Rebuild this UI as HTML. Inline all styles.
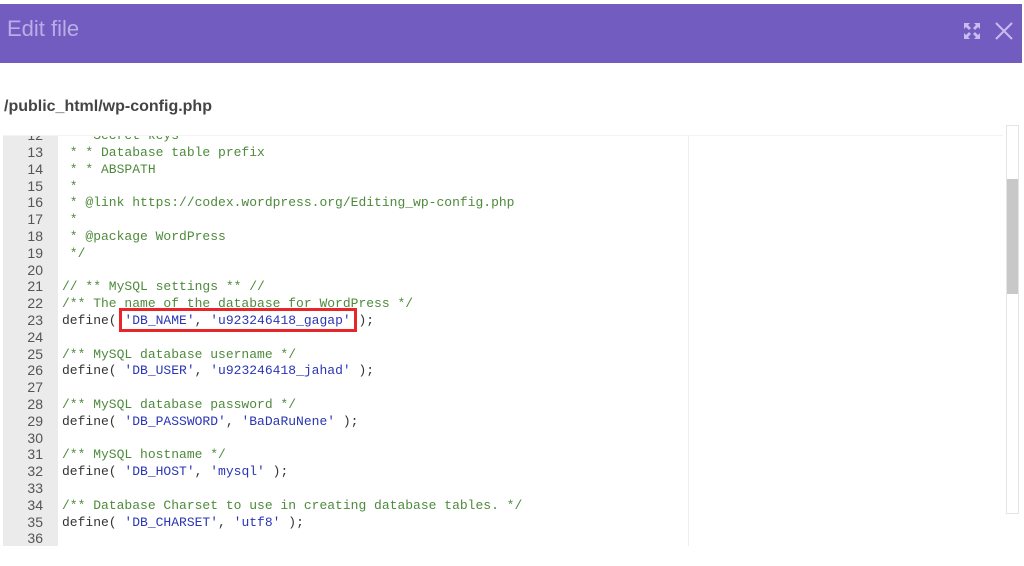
<!DOCTYPE html>
<html><head><meta charset="utf-8"><style>
body{margin:0;width:1024px;height:566px;background:#fff;position:relative;overflow:hidden;font-family:"Liberation Sans",sans-serif}
.hdr{position:absolute;left:0;top:4px;width:1022px;height:59px;background:#725cc0}
.hdr .t{position:absolute;left:7px;top:12px;font-size:22px;color:#b9aee6}
.path{position:absolute;left:4px;top:98px;font-size:16px;font-weight:bold;color:#444}
.ed{position:absolute;left:3px;top:135px;width:1000px;height:410px;overflow:hidden;border-top:1px solid #f3f3f3}
.gut{position:absolute;left:0;top:0;width:55px;height:410px;background:#ebebeb}
.margin{position:absolute;left:685px;top:0;width:1px;height:410px;background:#eee}
.ln{position:absolute;left:0;width:40px;text-align:right;font:14px/17px "Liberation Sans",sans-serif;color:#555}
.cd{position:absolute;left:59px;font:13px/17px "Liberation Mono",monospace;color:#333;white-space:pre}
.c{color:#4e8a3c}.s{color:#2a35b5}
.sb{position:absolute;left:1006px;top:125px;width:11px;height:387px;border:1px solid #e4e4e4;background:#fff}
.th{position:absolute;left:0;top:53px;width:11px;height:115px;background:#c8c8c8}
.box{position:absolute;left:119px;top:308px;width:238px;height:24px;border:3px solid #e8262a;box-sizing:border-box}
</style></head><body>
<div class="hdr"><div class="t">Edit file</div>
<svg style="position:absolute;left:963px;top:18px" width="18" height="18" viewBox="0 0 18 18" fill="#c6bdf0"><path d="M1 1h6l-2 2 3 3-2 2-3-3-2 2zM17 1v6l-2-2-3 3-2-2 3-3-2-2zM1 17v-6l2 2 3-3 2 2-3 3 2 2zM17 17h-6l2-2-3-3 2-2 3 3 2-2z"/></svg>
<svg style="position:absolute;left:995px;top:18px" width="18" height="18" viewBox="0 0 18 18" stroke="#c6bdf0" stroke-width="2"><path d="M1 1L17 17M17 1L1 17"/></svg>
</div>
<div class="path">/public_html/wp-config.php</div>
<div class="ed">
<div class="gut"></div><div class="margin"></div>
<div class="ln" style="top:-9px">12</div><div class="cd c" style="top:-9px">    Secret keys</div>
<div class="ln" style="top:8px">13</div><div class="cd c" style="top:8px"> * * Database table prefix</div>
<div class="ln" style="top:25px">14</div><div class="cd c" style="top:25px"> * * ABSPATH</div>
<div class="ln" style="top:42px">15</div><div class="cd c" style="top:42px"> *</div>
<div class="ln" style="top:58px">16</div><div class="cd c" style="top:58px"> * @link https://codex.wordpress.org/Editing_wp-config.php</div>
<div class="ln" style="top:75px">17</div><div class="cd c" style="top:75px"> *</div>
<div class="ln" style="top:92px">18</div><div class="cd c" style="top:92px"> * @package WordPress</div>
<div class="ln" style="top:109px">19</div><div class="cd c" style="top:109px"> */</div>
<div class="ln" style="top:126px">20</div>
<div class="ln" style="top:142px">21</div><div class="cd c" style="top:142px">// ** MySQL settings ** //</div>
<div class="ln" style="top:159px">22</div><div class="cd c" style="top:159px">/** The name of the database for WordPress */</div>
<div class="ln" style="top:176px">23</div><div class="cd" style="top:176px">define( <span class="s">'DB_NAME'</span>, <span class="s">'u923246418_gagap'</span> );</div>
<div class="ln" style="top:193px">24</div>
<div class="ln" style="top:210px">25</div><div class="cd c" style="top:210px">/** MySQL database username */</div>
<div class="ln" style="top:226px">26</div><div class="cd" style="top:226px">define( <span class="s">'DB_USER'</span>, <span class="s">'u923246418_jahad'</span> );</div>
<div class="ln" style="top:243px">27</div>
<div class="ln" style="top:260px">28</div><div class="cd c" style="top:260px">/** MySQL database password */</div>
<div class="ln" style="top:277px">29</div><div class="cd" style="top:277px">define( <span class="s">'DB_PASSWORD'</span>, <span class="s">'BaDaRuNene'</span> );</div>
<div class="ln" style="top:294px">30</div>
<div class="ln" style="top:310px">31</div><div class="cd c" style="top:310px">/** MySQL hostname */</div>
<div class="ln" style="top:327px">32</div><div class="cd" style="top:327px">define( <span class="s">'DB_HOST'</span>, <span class="s">'mysql'</span> );</div>
<div class="ln" style="top:344px">33</div>
<div class="ln" style="top:361px">34</div><div class="cd c" style="top:361px">/** Database Charset to use in creating database tables. */</div>
<div class="ln" style="top:378px">35</div><div class="cd" style="top:378px">define( <span class="s">'DB_CHARSET'</span>, <span class="s">'utf8'</span> );</div>
<div class="ln" style="top:394px">36</div>
</div>
<div class="sb"><div class="th"></div></div>
<div class="box"></div>
</body></html>
